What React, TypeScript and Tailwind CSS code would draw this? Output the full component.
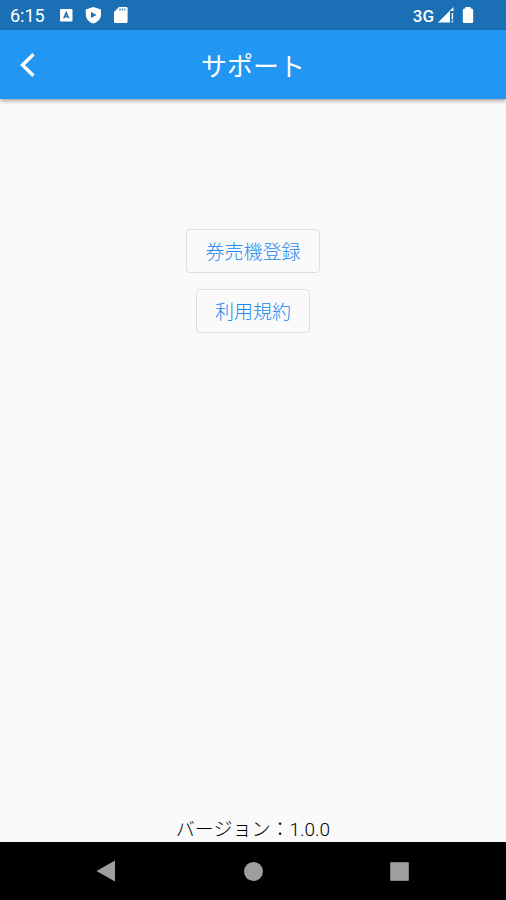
import { type ReactNode } from 'react';

const SUPPORT_LINKS = ['券売機登録', '利用規約'];

function StatusBar() {
  return (
    <div className="flex h-[30px] shrink-0 items-center justify-between bg-[#1a6fb5] pl-[10px] pr-8 text-white">
      <div className="flex items-center">
        <span className="w-12 pt-px text-[18px] leading-5">6:15</span>
        <svg className="mr-[10px] h-4 w-4" viewBox="0 0 16 16" aria-hidden="true">
          <rect x="2" y="2" width="12.5" height="12.5" rx="1" fill="#fff" />
          <path d="M5.8 11.2 8.2 5.6l2.4 5.6M7 9.4h2.4" fill="none" stroke="#1a6fb5" strokeWidth="1.5" />
        </svg>
        <svg className="mr-3 h-[18px] w-[18px]" viewBox="0 0 18 18" aria-hidden="true">
          <path d="M9.3 1 17 3.6V9c0 4-3.4 7-7.7 8.6C5 16 1.8 13 1.8 9V3.6Z" fill="#fff" />
          <path d="M7 6 12.6 9 7 12Z" fill="#1a6fb5" />
        </svg>
        <svg className="h-[18px] w-4" viewBox="0 0 16 18" aria-hidden="true">
          <path d="M5 1h7.4a1.2 1.2 0 0 1 1.2 1.2v13.5a1.2 1.2 0 0 1-1.2 1.2H1.2A1.2 1.2 0 0 1 0 15.7V6Z" fill="#fff" />
          <path d="M6 2.4v2M8.4 2.4v2M10.8 2.4v2" stroke="#1a6fb5" strokeWidth="1.1" />
        </svg>
      </div>
      <div className="flex items-center">
        <span className="mr-1 pt-px text-[17px] font-medium leading-5">3G</span>
        <svg className="mr-2 h-4 w-4" viewBox="0 0 16 16" aria-hidden="true">
          <path d="M0 15.5 15.5 0v4H12v11.5Z" fill="#fff" />
          <path d="M14.4 6v6.4M14.4 13.8v1.7" stroke="#fff" strokeWidth="1.4" />
        </svg>
        <svg className="h-[18px] w-3" viewBox="0 0 12 18" aria-hidden="true">
          <path d="M3.4 1h5.2v1.4h1a1.6 1.6 0 0 1 1.6 1.6V16a1 1 0 0 1-1 1H1.8a1 1 0 0 1-1-1V4a1.6 1.6 0 0 1 1.6-1.6h1Z" fill="#fff" />
        </svg>
      </div>
    </div>
  );
}

function AppBar({ title }: { title: string }) {
  return (
    <header className="z-10 grid h-[69px] shrink-0 grid-cols-[56px_1fr_56px] items-center bg-[#2196f3] text-white shadow-[0_2px_4px_rgba(0,0,0,0.35)]">
      <button type="button" aria-label="戻る" className="flex h-14 items-center justify-center">
        <svg className="h-7 w-7" viewBox="0 0 28 28" fill="none" aria-hidden="true">
          <path d="M19.5 3.2 8.5 14l11 10.8" stroke="#fff" strokeWidth="3.4" />
        </svg>
      </button>
      <h1 className="pt-1 text-center text-[26px] leading-8">{title}</h1>
    </header>
  );
}

function OutlineButton({ children }: { children: ReactNode }) {
  return (
    <button
      type="button"
      className="h-11 rounded-[4px] border border-[#dfdfdf] px-[18px] pt-1 text-[19px] font-light leading-6 text-[#2188ee]"
    >
      {children}
    </button>
  );
}

function NavigationBar() {
  return (
    <nav className="grid h-[58px] shrink-0 grid-cols-[1fr_146px_146px_146px_1fr] items-center bg-black">
      <button
        type="button"
        aria-label="Back"
        className="col-start-2 flex h-12 items-center justify-center"
      >
        <svg className="h-6 w-6" viewBox="0 0 24 24" aria-hidden="true">
          <path d="M20 1.5v21L1.5 12Z" fill="#9e9e9e" />
        </svg>
      </button>
      <button type="button" aria-label="Home" className="flex h-12 items-center justify-center">
        <span className="h-[19px] w-[19px] rounded-full bg-[#9e9e9e]" />
      </button>
      <button type="button" aria-label="Recents" className="flex h-12 items-center justify-center">
        <span className="h-[19px] w-[19px] rounded-[1px] border border-[#858585] bg-[#9e9e9e]" />
      </button>
    </nav>
  );
}

export default function App() {
  return (
    <div className="flex min-h-screen flex-col bg-[#fafafa] font-['Roboto','Noto_Sans_CJK_JP',sans-serif]">
      <StatusBar />
      <AppBar title="サポート" />
      <main className="flex flex-1 flex-col items-center pt-[130px]">
        <div className="flex flex-col items-center gap-4">
          {SUPPORT_LINKS.map((label) => (
            <OutlineButton key={label}>{label}</OutlineButton>
          ))}
        </div>
        <p className="mt-auto text-[19px] font-light leading-6 text-black">バージョン：1.0.0</p>
      </main>
      <NavigationBar />
    </div>
  );
}
